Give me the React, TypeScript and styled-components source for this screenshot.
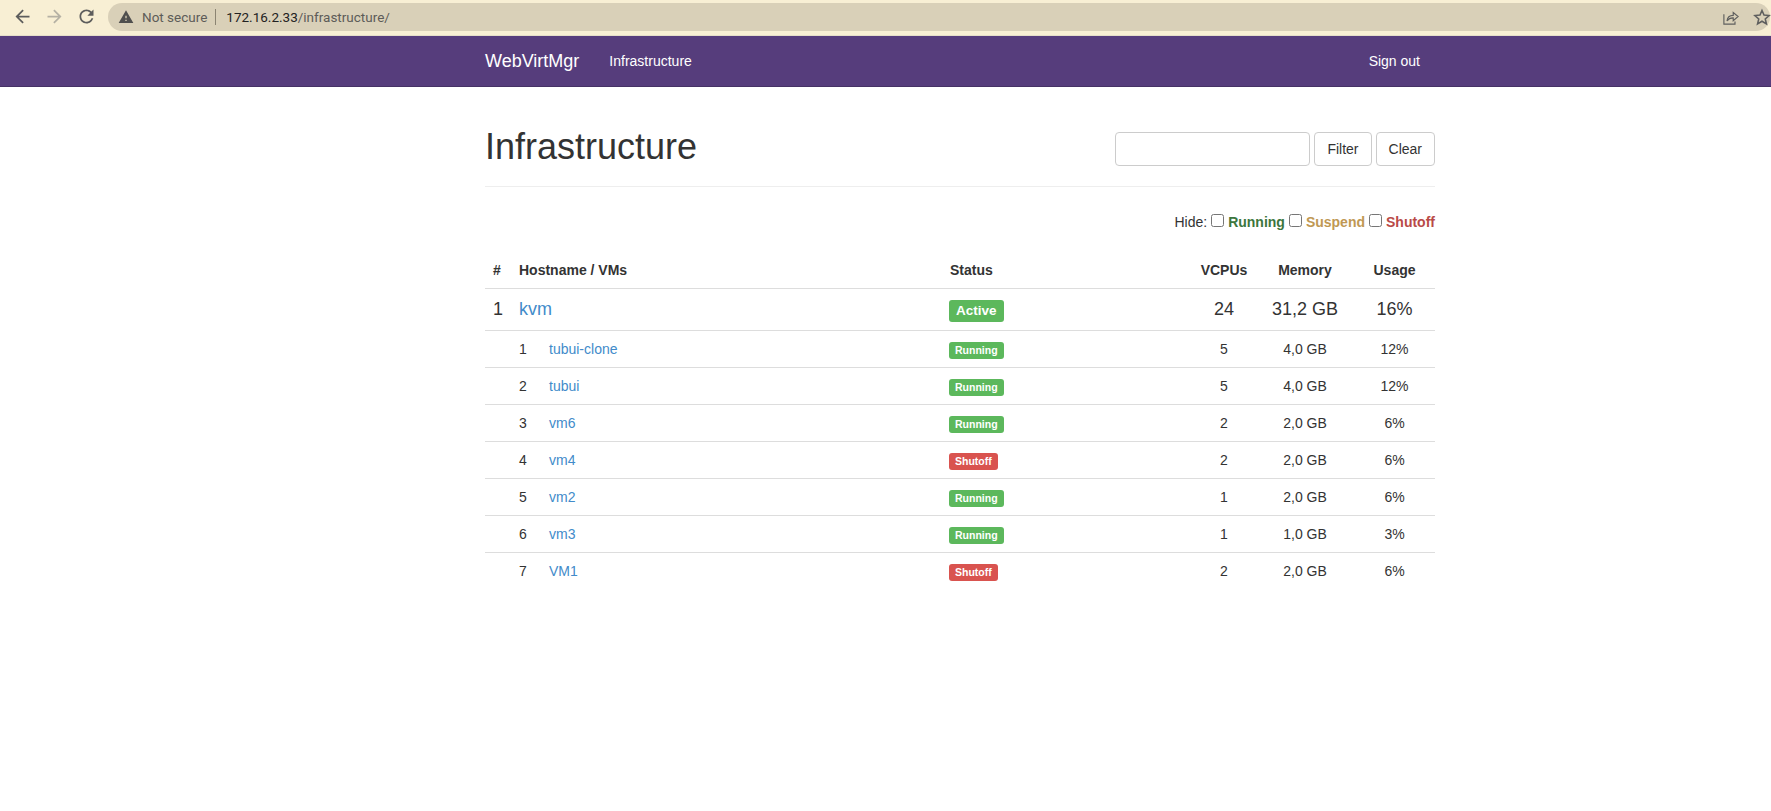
import React from "react";
import styled, { createGlobalStyle } from "styled-components";

const Global = createGlobalStyle`
  html, body { margin: 0; padding: 0; background: #fff; }
  body { font-family: "Liberation Sans", Arial, sans-serif; font-size: 14px; line-height: 20px; color: #333; }
  * { box-sizing: border-box; }
`;

const Chrome = styled.div`
  height: 36px;
  background: #f8efd4;
  border-bottom: 1px solid #e6dfc9;
  display: flex;
  align-items: center;
  padding: 0 1px 2px 11.5px;
`;
const NavIcon = styled.svg<{ $dim?: boolean }>`
  width: 21px;
  height: 21px;
  margin-right: 11px;
  fill: ${(p) => (p.$dim ? "#b5b1a4" : "#5d5d5c")};
  flex: none;
`;
const Omnibox = styled.div`
  margin-left: 0.5px;
  flex: 1;
  height: 28px;
  border-radius: 14px;
  background: #d9d0b8;
  display: flex;
  align-items: center;
  padding: 0 1px 0 10px;
  font-size: 14px;
`;
const Warn = styled.svg`
  width: 16px;
  height: 16px;
  fill: #4f4f4e;
  flex: none;
`;
const NotSecure = styled.span`
  margin-left: 8px;
  color: #5d5c58;
  font-family: Roboto, sans-serif;
  font-size: 13.5px;
`;
const Divider = styled.span`
  width: 1px;
  height: 16px;
  background: #8b8472;
  margin: 0 10px 0 8px;
`;
const Url = styled.span`
  color: #5d5c58;
  font-family: Roboto, sans-serif;
  font-size: 13.5px;
  flex: 1;
  b { font-weight: 400; color: #222; }
`;
const ShareIcon = styled.svg`
  width: 16px;
  height: 16px;
  flex: none;
  margin-right: 16px;
  fill: none;
  stroke: #5f5f5e;
`;
const StarIcon = styled.svg`
  width: 14px;
  height: 14px;
  flex: none;
  overflow: visible;
  fill: none;
  stroke: #5f5f5e;
`;

const Navbar = styled.nav`
  height: 51px;
  background: #563d7c;
  border-bottom: 1px solid #463265;
`;
const Container = styled.div`
  width: 950px;
  margin: 0 0 0 485px;
`;
const NavInner = styled(Container)`
  display: flex;
  align-items: center;
  height: 50px;
  color: #fff;
`;
const Brand = styled.a`
  font-size: 18px;
  margin-right: 30px;
`;
const NavLink = styled.a`
  font-size: 14px;
`;
const SignOut = styled.a`
  margin-left: auto;
  margin-right: 15px;
  font-size: 14px;
`;

const PageHeader = styled.div`
  margin-top: 40px;
  height: 60px;
  border-bottom: 1px solid #eee;
  display: flex;
  justify-content: space-between;
  align-items: flex-start;
`;
const Title = styled.h1`
  margin: 0;
  font-size: 36px;
  font-weight: 500;
  line-height: 40px;
  color: #333;
`;
const FilterForm = styled.form`
  display: flex;
  gap: 4px;
  margin-top: 5px;
`;
const FilterInput = styled.input`
  width: 195px;
  height: 34px;
  border: 1px solid #ccc;
  border-radius: 4px;
  background: #fff;
`;
const Btn = styled.button`
  height: 34px;
  padding: 6px 12px;
  border: 1px solid #ccc;
  border-radius: 4px;
  background: #fff;
  color: #333;
  font: inherit;
`;

const HideRow = styled.div`
  display: flex;
  justify-content: flex-end;
  align-items: center;
  height: 20px;
  margin-top: 25px;
  white-space: pre;
`;
const Check = styled.input`
  width: 13px;
  height: 13px;
  margin: 0 4px 3px 4px;
`;
const Legend = styled.strong<{ $c: string }>`
  color: ${(p) => p.$c};
  font-weight: 700;
`;

const Table = styled.table`
  width: 950px;
  margin-top: 21px;
  border-collapse: collapse;
  table-layout: fixed;
`;
const Th = styled.th<{ $w: number; $center?: boolean }>`
  width: ${(p) => p.$w}px;
  height: 35px;
  padding: 6px 8px 8px;
  vertical-align: bottom;
  font-size: 14px;
  font-weight: 700;
  text-align: ${(p) => (p.$center ? "center" : "left")};
  border-bottom: 1px solid #ddd;
`;
const Row = styled.tr<{ $host?: boolean }>`
  height: ${(p) => (p.$host ? 42 : 37)}px;
  font-size: ${(p) => (p.$host ? 18 : 14)}px;
  td { border-bottom: 1px solid #ddd; }
  &:last-child td { border-bottom: 0; }
`;
const Td = styled.td<{ $center?: boolean }>`
  padding: 0 8px;
  vertical-align: middle;
  text-align: ${(p) => (p.$center ? "center" : "left")};
`;
const Link = styled.a`
  color: #428bca;
`;
const VmCell = styled.div`
  display: flex;
`;
const VmNum = styled.span`
  width: 30px;
`;
const Label = styled.span<{ $c: string; $big?: boolean }>`
  display: inline-block;
  background: ${(p) => p.$c};
  color: #fff;
  font-weight: 700;
  border-radius: 3px;
  vertical-align: middle;
  margin: 3px 0 0 -1px;
  font-size: ${(p) => (p.$big ? 13.5 : 10.5)}px;
  line-height: ${(p) => (p.$big ? 22 : 17)}px;
  padding: 0 ${(p) => (p.$big ? 7 : 6)}px;
`;

const GREEN = "#5cb85c";
const RED = "#d9534f";

const vms = [
  ["tubui-clone", "Running", "5", "4,0 GB", "12%"],
  ["tubui", "Running", "5", "4,0 GB", "12%"],
  ["vm6", "Running", "2", "2,0 GB", "6%"],
  ["vm4", "Shutoff", "2", "2,0 GB", "6%"],
  ["vm2", "Running", "1", "2,0 GB", "6%"],
  ["vm3", "Running", "1", "1,0 GB", "3%"],
  ["VM1", "Shutoff", "2", "2,0 GB", "6%"],
];

const ARROW = "M20 11H7.83l5.59-5.59L12 4l-8 8 8 8 1.41-1.41L7.83 13H20v-2z";

export default function App() {
  return (
    <>
      <Global />
      <Chrome>
        <NavIcon viewBox="0 0 24 24"><path d={ARROW} /></NavIcon>
        <NavIcon viewBox="0 0 24 24" $dim><path d={ARROW} transform="rotate(180 12 12)" /></NavIcon>
        <NavIcon viewBox="0 0 24 24"><path d="M17.65 6.35C16.2 4.9 14.21 4 12 4c-4.42 0-7.99 3.58-7.99 8s3.57 8 7.99 8c3.73 0 6.84-2.55 7.73-6h-2.08c-.82 2.33-3.04 4-5.65 4-3.31 0-6-2.69-6-6s2.69-6 6-6c1.66 0 3.14.69 4.22 1.78L13 11h7V4l-2.35 2.35z" /></NavIcon>
        <Omnibox>
          <Warn viewBox="0 0 24 24"><path d="M1 21h22L12 2 1 21zm12-3h-2v-2h2v2zm0-4h-2v-4h2v4z" /></Warn>
          <NotSecure>Not secure</NotSecure>
          <Divider />
          <Url><b>172.16.2.33</b>/infrastructure/</Url>
          <ShareIcon viewBox="0 0 18 18" strokeWidth="1.3">
            <path d="M1 6v11h12.5v-3" />
            <path d="M4.5 13.5c.4-3.9 3.2-6.3 7-6.3V4L17 8.5l-5.5 4.7V10c-2.9-.1-5.2.9-7 3.5z" />
          </ShareIcon>
          <StarIcon viewBox="3 3 18 18" strokeWidth="2">
            <path d="M12 3.6l2.6 6 6.5.6-4.9 4.3 1.5 6.4L12 17.5l-5.7 3.4 1.5-6.4-4.9-4.3 6.5-.6z" />
          </StarIcon>
        </Omnibox>
      </Chrome>
      <Navbar>
        <NavInner>
          <Brand>WebVirtMgr</Brand>
          <NavLink>Infrastructure</NavLink>
          <SignOut>Sign out</SignOut>
        </NavInner>
      </Navbar>
      <Container>
        <PageHeader>
          <Title>Infrastructure</Title>
          <FilterForm>
            <FilterInput />
            <Btn type="button">Filter</Btn>
            <Btn type="button">Clear</Btn>
          </FilterForm>
        </PageHeader>
        <HideRow>
          Hide:
          <Check type="checkbox" />
          <Legend $c="#3c763d">Running</Legend>
          <Check type="checkbox" />
          <Legend $c="#c09853">Suspend</Legend>
          <Check type="checkbox" />
          <Legend $c="#b94a48">Shutoff</Legend>
        </HideRow>
        <Table>
          <thead>
            <tr>
              <Th $w={26}>#</Th>
              <Th $w={431}>Hostname / VMs</Th>
              <Th $w={250}>Status</Th>
              <Th $w={64} $center>VCPUs</Th>
              <Th $w={98} $center>Memory</Th>
              <Th $w={81} $center>Usage</Th>
            </tr>
          </thead>
          <tbody>
            <Row $host>
              <Td>1</Td>
              <Td><Link>kvm</Link></Td>
              <Td><Label $c={GREEN} $big>Active</Label></Td>
              <Td $center>24</Td>
              <Td $center>31,2 GB</Td>
              <Td $center>16%</Td>
            </Row>
            {vms.map((v, i) => (
              <Row key={v[0]}>
                <Td />
                <Td>
                  <VmCell>
                    <VmNum>{i + 1}</VmNum>
                    <Link>{v[0]}</Link>
                  </VmCell>
                </Td>
                <Td><Label $c={v[1] === "Running" ? GREEN : RED}>{v[1]}</Label></Td>
                <Td $center>{v[2]}</Td>
                <Td $center>{v[3]}</Td>
                <Td $center>{v[4]}</Td>
              </Row>
            ))}
          </tbody>
        </Table>
      </Container>
    </>
  );
}
